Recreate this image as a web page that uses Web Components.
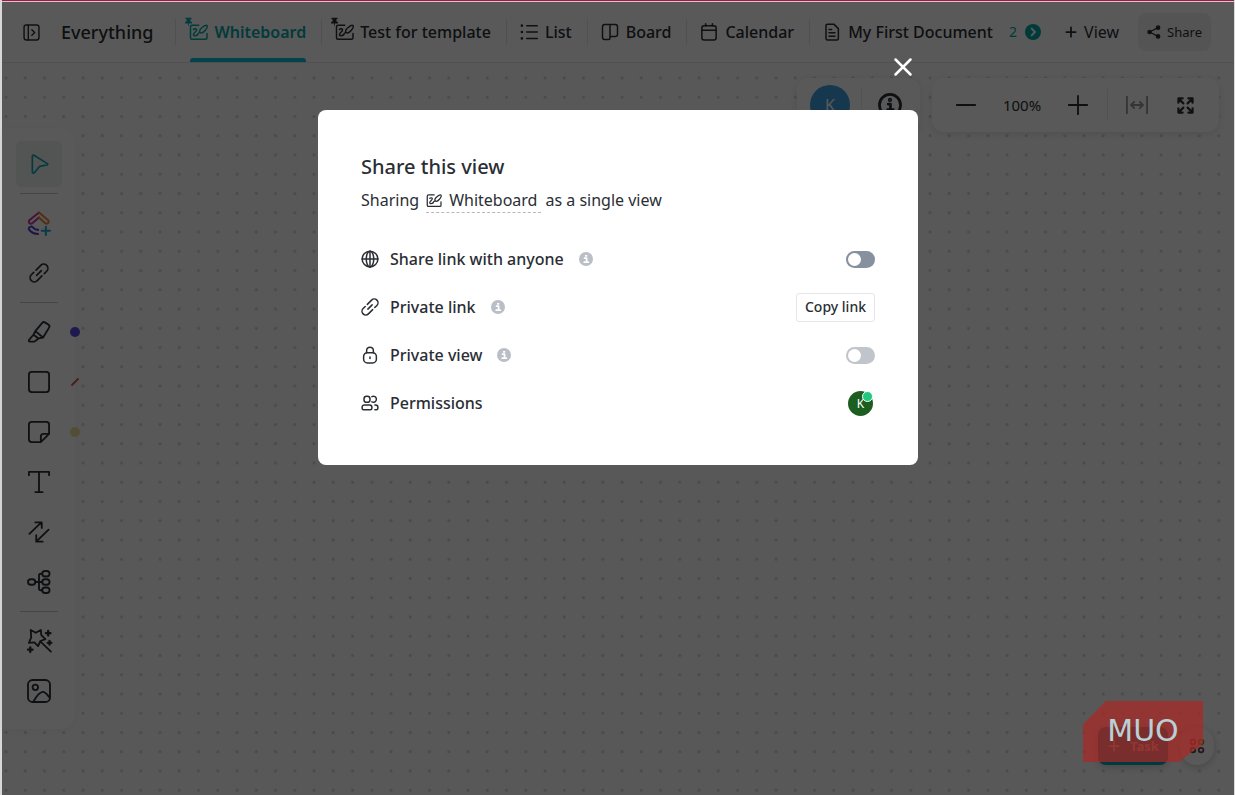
<!DOCTYPE html>
<html lang="en">
<head>
<meta charset="utf-8">
<meta name="viewport" content="width=device-width, initial-scale=1">
<title>Whiteboard</title>
<style>
  body {
    margin: 0;
    background: #fff;
    color: #2a2e34;
    font: 16px/24px "Noto Sans", "Open Sans", sans-serif;
  }
</style>
</head>
<body>
<work-space>
  <view-bar slot="bar"></view-bar>
  <tool-rail slot="tools"></tool-rail>
  <canvas-controls slot="controls"></canvas-controls>
  <task-tray slot="tray"></task-tray>
  <share-dialog slot="dialog">
    <share-row icon="globe" label="Share link with anyone" info>
      <toggle-switch label="Share link with anyone"></toggle-switch>
    </share-row>
    <share-row icon="link" label="Private link" info>
      <copy-button>Copy link</copy-button>
    </share-row>
    <share-row icon="lock" label="Private view" info>
      <toggle-switch label="Private view" disabled></toggle-switch>
    </share-row>
    <share-row icon="people" label="Permissions">
      <user-avatar online>K</user-avatar>
    </share-row>
  </share-dialog>
  <brand-mark slot="mark">MUO</brand-mark>
</work-space>

<script>
// 24x24 stroke icons, shared by every component
const ICONS = {
  panel: '<rect x="1.500" y="1.500" width="21" height="21" rx="3"/><path d="M7.500 1.500v21M12.500 8l4 4-4 4"/>',
  board2: '<path d="M13 3H4a2 2 0 0 0-2 2v14.500a2 2 0 0 0 2 2h18a2 2 0 0 0 2-2V14"/><path d="M6 8.500c1.500-1.500 4.500-1 4 1-.5 2.500-4 3.500-4 6 0 2 3.500 2 5.500 0"/><path d="M11.500 15.500c.5-1.500 1.500-2.500 3-3M14.500 12.500c-1-2 .5-4.500 3-6.500C20 4 23 2.500 24 3.500s-.5 4-2.500 6.500-5 4-7 2.500z"/>',
  list: '<path d="M9 3.500h14M9 12h14M9 20.500h14"/><g fill="currentColor" stroke="none"><circle cx="2.500" cy="3.500" r="1.700"/><circle cx="2.500" cy="12" r="1.700"/><circle cx="2.500" cy="20.500" r="1.700"/></g>',
  board: '<path d="M5 2h14a3 3 0 0 1 3 3v10a3 3 0 0 1-3 3h-7v2a2 2 0 0 1-2 2H5a3 3 0 0 1-3-3V5a3 3 0 0 1 3-3zM12 2v16"/>',
  calendar: '<rect x="2.500" y="3.500" width="19" height="19" rx="3"/><path d="M2.500 9.500h19M7.500 1v3M16.500 1v3"/>',
  doc: '<path d="M6 1.500h8.500l6 6v13a2 2 0 0 1-2 2H6a2 2 0 0 1-2-2v-17a2 2 0 0 1 2-2zM8 8.500h3.500M8 13h8M8 17.500h8"/>',
  plus: '<path d="M12 4v16M4 12h16"/>',
  minus: '<path d="M2 12h20"/>',
  bigplus: '<path d="M12 2v20M2 12h20"/>',
  share: '<g fill="currentColor"><circle cx="4.500" cy="12" r="3"/><circle cx="19" cy="4.500" r="3"/><circle cx="19" cy="19.500" r="3"/></g><path d="M19 4.500L4.500 12 19 19.500"/>',
  go: '<circle cx="12" cy="12" r="12" fill="currentColor" stroke="none"/><path d="M10 7l5 5-5 5" stroke="#fff"/>',
  info: '<circle cx="12" cy="12" r="11.500"/><path d="M10 11h2.500v6M9.500 17h6"/><circle cx="12" cy="6.500" r=".8" fill="currentColor"/>',
  infofill: '<circle cx="12" cy="12" r="12" fill="currentColor" stroke="none"/><path d="M9.500 10.500H13v7M9 17.500h7M11.500 6.500h1.500" stroke="#fff"/>',
  fit: '<path d="M1 3v18M23 3v18M6 12h12M9 8.500L5.500 12 9 15.500M15 8.500l3.500 3.500-3.500 3.500"/>',
  expand: '<path d="M2 8V2h6M16 2h6v6M22 16v6h-6M8 22H2v-6M2 2l7 7M22 2l-7 7M22 22l-7-7M2 22l7-7"/>',
  close: '<path d="M3 3l18 18M21 3L3 21"/>',
  cursor: '<path d="M4 3c0-1.500 1-2 2-1.500l16 10c1 .7.500 1.500-.5 1.700L14 14.500c-1 .2-1.500.5-2 1L7 22c-1 1.500-3 1-3-.5z"/>',
  link: '<g transform="rotate(-45 12 12)"><path d="M12 7h8a5 5 0 0 1 0 10h-4M12 17H4A5 5 0 0 1 4 7h4M8 12h8"/></g>',
  marker: '<path d="M8 11l7.500-9c1-1.200 2-1.200 3-.5l4 2.500c1 .8 1.200 2 .5 3.200L16.500 18l-5 1L6 15zM6 15l-4 4.500c-1.500 1.500-1.500 3 0 3h5l4.500-3.500M8 11l8.500 7M6 15l5.500 4"/>',
  square: '<rect x="1" y="1" width="22" height="22" rx="3"/>',
  note: '<path d="M4 1h16a3 3 0 0 1 3 3v10l-9 9H4a3 3 0 0 1-3-3V4a3 3 0 0 1 3-3zM23 14h-6a3 3 0 0 0-3 3v6"/>',
  text: '<path d="M1 4.500V1h22v3.500M12 1v22M8 23h8"/>',
  arrows: '<path d="M1.500 14L14 2M8 1.500h7v6M22.500 9.500L9.500 22M9 15.500v7h7"/>',
  map: '<rect x="0" y="9" width="8" height="6" rx="3"/><rect x="15.500" y="0" width="8" height="6" rx="3"/><rect x="15.500" y="9" width="8" height="6" rx="3"/><rect x="15.500" y="18" width="8" height="6" rx="3"/><path d="M8 12h7.500M15.500 3H14a2 2 0 0 0-2 2v14a2 2 0 0 0 2 2h1.500"/>',
  wand: '<path d="M3 0l5.500 3L14 0l.5 5.500L19 10l-5.500 2L11 17.500 7 13.500l-6 .5 2.500-6zM14 13l11 10.500"/><path stroke-width="2.500" d="M22 1v5M19.500 3.500h5M23.500 12v4M21.500 14h4M2.500 19v5M0 21.500h5"/>',
  image: '<rect x="0" y="0" width="24" height="24" rx="5"/><circle cx="8" cy="8" r="3"/><path d="M6 23.500c2.500-4.500 6.500-10 10-10.500 3-.3 5 3 7.500 6"/>',
  globe: '<circle cx="12" cy="12" r="10.500"/><ellipse cx="12" cy="12" rx="5" ry="10.500"/><path d="M12 1.500v21M1.500 12h21"/>',
  lock: '<rect x="3.500" y="9" width="17" height="13.500" rx="5"/><path d="M7.500 9V6a4.500 4.500 0 0 1 9 0v3M12 14.500v2"/>',
  people: '<rect x="4" y="3" width="8" height="8" rx="3.500"/><path d="M4.500 14.500h7a3 3 0 0 1 3 3V19a2 2 0 0 1-2 2h-9a2 2 0 0 1-2-2v-1.500a3 3 0 0 1 3-3zM14.500 3.500c3-1.500 6 .5 6 3.500s-3 5-6 3.500M18.500 14.500h1a3 3 0 0 1 3 3V19a2 2 0 0 1-2 2h-2"/>',
  pin: '<path d="M4 2h16v4h-3v5l4 2v4h-8v6h-2v-6H3v-4l4-2V6H4z" fill="currentColor" stroke="none"/>',
  clickup: '<g fill="none" stroke-width="2.200"><path d="M12 .5L1.500 9c-1 1-.5 3 .5 3.500s2 .2 3-.5l7-6" stroke="#c4359b"/><path d="M12 .5L22 9c1 1 .5 3-.5 3.500s-2 .2-3-.5L12 6" stroke="#e8833a"/><path d="M11 24c-4 0-8-2-10-5-.5-1.500.5-2.500 2-3s2 .5 3 1.500c1.500 1.500 3 2 5 2" stroke="#5b3ed0"/><path d="M19.500 16v9M15 20.500h9" stroke="#22a7d0"/></g>',
  apps: '<circle cx="5" cy="5" r="4" stroke="#e0458c"/><circle cx="19" cy="5" r="4" stroke="#79a83a"/><circle cx="5" cy="19" r="4" stroke="#1f6b46"/><circle cx="19" cy="19" r="4" stroke="#8a3a50"/>'
};

class UiIcon extends HTMLElement {
  connectedCallback() {
    const weight = this.getAttribute('weight') || 2;
    this.attachShadow({ mode: 'open' }).innerHTML = `
      <style>
        :host { display: inline-block; flex: none; width: 18px; height: 18px; }
        svg { display: block; width: 100%; height: 100%; overflow: visible; }
      </style>
      <svg viewBox="0 0 24 24" fill="none" stroke="currentColor" stroke-width="${weight}"
        stroke-linecap="round" stroke-linejoin="round" aria-hidden="true">${ICONS[this.getAttribute('name')]}</svg>
    `;
  }
}

class WorkSpace extends HTMLElement {
  connectedCallback() {
    this.attachShadow({ mode: 'open' }).innerHTML = `
      <style>
        :host {
          display: flex;
          flex-direction: column;
          box-sizing: border-box;
          min-height: 100vh;
          position: relative;
          border: solid #d8d8d8;
          border-width: 0 1px 0 2px;
        }
        .accent { height: 1px; background: #8d2448; border-bottom: 1px solid #f2b8c6; }
        main {
          flex: 1;
          display: flex;
          align-items: flex-start;
          justify-content: space-between;
          background: #fcfcfc radial-gradient(circle at 4px 15px, #d4d4d4 1px, transparent 2px);
          background-size: calc(100% / 64) calc(100% / 38);
        }
        ::slotted([slot=tools]) { margin-top: 65px; }
        ::slotted([slot=controls]) { margin: 15px 15px 0 0; }
        .scrim { position: absolute; inset: 2px 0 0; background: rgba(0, 0, 0, .65); }
        ::slotted([slot=tray]) { position: absolute; right: 20px; bottom: 30px; }
        ::slotted([slot=mark]) { position: absolute; right: 31px; bottom: 33px; }
        ::slotted([slot=dialog]) { position: absolute; inset: 50px 0 auto; }
      </style>
      <div class="accent"></div>
      <slot name="bar"></slot>
      <main>
        <slot name="tools"></slot>
        <slot name="controls"></slot>
      </main>
      <slot name="tray"></slot>
      <div class="scrim"></div>
      <slot name="mark"></slot>
      <slot name="dialog"></slot>
    `;
  }
}

class ViewTab extends HTMLElement {
  connectedCallback() {
    this.attachShadow({ mode: 'open' }).innerHTML = `
      <style>
        :host { display: flex; align-items: center; height: 60px; }
        :host::before { content: ""; width: 1px; height: 26px; background: #e4e6ea; }
        a {
          position: relative;
          display: flex;
          align-items: center;
          gap: 7px;
          height: 60px;
          padding: 0 15px 0 13px;
          color: inherit;
          font-weight: 500;
          text-decoration: none;
          white-space: nowrap;
        }
        :host([active]) a { color: #08a8a8; font-weight: 600; }
        :host([active]) a::after {
          content: "";
          position: absolute;
          left: 14px;
          right: 15px;
          bottom: 0;
          height: 4px;
          border-radius: 3px 3px 0 0;
          background: #08bcd4;
        }
        .pin { position: absolute; left: 8px; top: 15px; width: 9px; height: 9px; }
      </style>
      <a href="#">
        ${this.hasAttribute('pinned') ? '<ui-icon class="pin" name="pin"></ui-icon>' : ''}
        <ui-icon name="${this.getAttribute('icon')}"></ui-icon>
        <slot></slot>
      </a>
    `;
  }
}

class ViewBar extends HTMLElement {
  connectedCallback() {
    this.attachShadow({ mode: 'open' }).innerHTML = `
      <style>
        :host {
          display: flex;
          align-items: center;
          height: 60px;
          padding: 0 23px 0 21px;
          border-bottom: 1px solid #e4e6ea;
          background: #fff;
        }
        button { border: 0; padding: 0; background: none; color: inherit; font: inherit; }
        h1 { margin: 0 22px 0 20px; font-size: 18px; font-weight: 500; }
        nav { display: flex; flex: 1; }
        .side { display: flex; }
        .side ui-icon { width: 17px; height: 17px; margin-right: 1px; }
        .more { display: flex; align-items: center; gap: 8px; color: #0aa; font-size: 14px; margin-right: 23px; }
        .more ui-icon { width: 16px; height: 16px; color: #05a5a5; }
        .add { display: flex; align-items: center; gap: 6px; margin-right: 19px; }
        .add ui-icon { width: 14px; height: 14px; }
        .share {
          display: flex;
          align-items: center;
          gap: 6px;
          height: 38px;
          padding: 0 9px;
          border-radius: 8px;
          background: #f0f0f1;
          font-size: 13px;
        }
        .share ui-icon { width: 14px; height: 14px; }
      </style>
      <button class="side" aria-label="Open sidebar"><ui-icon name="panel"></ui-icon></button>
      <h1>Everything</h1>
      <nav>
        <view-tab icon="board2" pinned active>Whiteboard</view-tab>
        <view-tab icon="board2" pinned>Test for template</view-tab>
        <view-tab icon="list">List</view-tab>
        <view-tab icon="board">Board</view-tab>
        <view-tab icon="calendar">Calendar</view-tab>
        <view-tab icon="doc">My First Document</view-tab>
      </nav>
      <button class="more" aria-label="More views">2 <ui-icon name="go" weight="3"></ui-icon></button>
      <button class="add"><ui-icon name="plus" weight="3"></ui-icon>View</button>
      <button class="share"><ui-icon name="share"></ui-icon>Share</button>
    `;
  }
}

class ToolRail extends HTMLElement {
  connectedCallback() {
    const tool = (name, label, badge = '') =>
      `<button aria-label="${label}" class="${name}"><ui-icon name="${name}"></ui-icon>${badge}</button>`;
    this.attachShadow({ mode: 'open' }).innerHTML = `
      <style>
        :host {
          display: flex;
          flex-direction: column;
          gap: 4px;
          width: 46px;
          padding: 13px 13px 15px 14px;
          border-radius: 0 14px 14px 0;
          background: #fff;
          box-shadow: 0 2px 8px rgba(0, 0, 0, .04);
        }
        button {
          position: relative;
          display: grid;
          place-items: center;
          height: 46px;
          padding: 0;
          border: 0;
          border-radius: 6px;
          background: none;
          color: inherit;
        }
        button.cursor { background: #eeeff0; color: #10a5b0; }
        ui-icon { width: 22px; height: 22px; }
        .cursor ui-icon, .link ui-icon { width: 20px; height: 20px; }
        hr { width: 38px; height: 1px; margin: 2px auto; border: 0; background: #c4c7cc; }
        i { position: absolute; left: 54px; top: 18px; width: 10px; height: 10px; border-radius: 50%; }
        .line { left: 58px; width: 2px; border-radius: 0; transform: rotate(45deg); }
      </style>
      ${tool('cursor', 'Select')}
      <hr>
      ${tool('clickup', 'Add task')}
      ${tool('link', 'Link')}
      <hr>
      ${tool('marker', 'Draw', '<i style="background: #5b4be0"></i>')}
      ${tool('square', 'Shape', '<i class="line" style="background: #d05a5a"></i>')}
      ${tool('note', 'Sticky note', '<i style="background: #e8dc9c"></i>')}
      ${tool('text', 'Text')}
      ${tool('arrows', 'Connector')}
      ${tool('map', 'Mind map')}
      <hr>
      ${tool('wand', 'Generate')}
      ${tool('image', 'Image')}
    `;
  }
}

class CanvasControls extends HTMLElement {
  connectedCallback() {
    this.attachShadow({ mode: 'open' }).innerHTML = `
      <style>
        :host { display: flex; gap: 12px; }
        section {
          display: flex;
          align-items: center;
          height: 54px;
          padding: 0 10px;
          border-radius: 12px;
          background: #fff;
          box-shadow: 0 2px 8px rgba(0, 0, 0, .1);
        }
        button { display: grid; place-items: center; width: 48px; height: 48px; padding: 0; border: 0; background: none; color: inherit; }
        ui-icon { width: 22px; height: 22px; }
        .people button { width: 40px; }
        .avatar {
          width: 40px;
          margin: 0 11px 0 3px;
          border-radius: 50%;
          background: #40a0e0;
          color: #fff;
          line-height: 40px;
          text-align: center;
        }
        .rule { width: 1px; height: 32px; background: #e9ebee; }
        .people .rule { margin-right: 8px; }
        .zoom .rule { margin: 0 5px; }
        .value { width: 64px; font-size: 15px; text-align: center; }
        .fit { color: #93979e; }
        .full { width: 17px; height: 17px; }
      </style>
      <section class="people">
        <span class="avatar">K</span>
        <span class="rule"></span>
        <button aria-label="Info"><ui-icon name="info" weight="3"></ui-icon></button>
      </section>
      <section class="zoom">
        <button aria-label="Zoom out"><ui-icon name="minus"></ui-icon></button>
        <span class="value">100%</span>
        <button aria-label="Zoom in"><ui-icon name="bigplus"></ui-icon></button>
        <span class="rule"></span>
        <button class="fit" aria-label="Fit width"><ui-icon name="fit"></ui-icon></button>
        <button aria-label="Full screen"><ui-icon class="full" name="expand" weight="3"></ui-icon></button>
      </section>
    `;
  }
}

class TaskTray extends HTMLElement {
  connectedCallback() {
    this.attachShadow({ mode: 'open' }).innerHTML = `
      <style>
        :host { display: flex; gap: 12px; }
        button {
          display: flex;
          align-items: center;
          justify-content: center;
          gap: 9px;
          width: 34px;
          height: 38px;
          padding: 0;
          border: 0;
          border-radius: 17px;
          background: #fff;
          box-shadow: 0 2px 8px rgba(0, 0, 0, .2);
          font: 700 13px/20px "Noto Sans", sans-serif;
          color: #fff;
        }
        .task { width: 70px; border-radius: 8px; background: #03a4b8; }
        ui-icon { width: 14px; height: 14px; }
      </style>
      <button class="task"><ui-icon name="plus" weight="3"></ui-icon>Task</button>
      <button aria-label="Apps"><ui-icon name="apps" weight="3"></ui-icon></button>
    `;
  }
}

class BrandMark extends HTMLElement {
  connectedCallback() {
    this.attachShadow({ mode: 'open' }).innerHTML = `
      <style>
        :host {
          display: block;
          width: 120px;
          height: 61px;
          background: rgba(172, 40, 36, .7);
          clip-path: polygon(19% 0, 100% 0, 100% 70%, 80% 100%, 0 100%, 0 38%);
          color: #b9d0d6;
          font: 30px/60px "DejaVu Sans", sans-serif;
          text-align: center;
        }
      </style>
      <slot></slot>
    `;
  }
}

class ShareDialog extends HTMLElement {
  connectedCallback() {
    this.attachShadow({ mode: 'open' }).innerHTML = `
      <style>
        :host { display: block; }
        .frame { display: flex; flex-direction: column; width: 600px; max-width: 100%; margin: 0 auto; }
        .close {
          display: grid;
          place-items: center;
          align-self: flex-end;
          width: 30px;
          height: 34px;
          margin-bottom: 26px;
          padding: 0;
          border: 0;
          background: none;
          color: #fff;
        }
        .close ui-icon { width: 20px; height: 20px; }
        section { padding: 43px 43px 38px; border-radius: 8px; background: #fff; }
        h2 { margin: 0 0 7px; font-size: 20px; font-weight: 500; line-height: 28px; }
        p { display: flex; gap: 4px; margin: 0 0 22px; line-height: 24px; }
        .view {
          display: flex;
          align-items: center;
          gap: 8px;
          margin-left: 3px;
          padding-right: 4px;
          border-bottom: 1px dashed #b5b9bf;
        }
        .view ui-icon { width: 15px; height: 15px; }
      </style>
      <div class="frame">
        <button class="close" aria-label="Close"><ui-icon name="close" weight="3"></ui-icon></button>
        <section role="dialog" aria-labelledby="title">
          <h2 id="title">Share this view</h2>
          <p>Sharing <span class="view"><ui-icon name="board2" weight="2"></ui-icon>Whiteboard</span> as a single view</p>
          <slot></slot>
        </section>
      </div>
    `;
  }
}

class ShareRow extends HTMLElement {
  connectedCallback() {
    this.attachShadow({ mode: 'open' }).innerHTML = `
      <style>
        :host { display: flex; align-items: center; height: 48px; }
        .label { margin: 0 15px 0 11px; font-weight: 500; }
        .info { width: 14px; height: 14px; color: #b9bec7; }
        slot { display: flex; margin-left: auto; }
      </style>
      <ui-icon name="${this.getAttribute('icon')}"></ui-icon>
      <span class="label">${this.getAttribute('label')}</span>
      ${this.hasAttribute('info') ? '<ui-icon class="info" name="infofill" weight="3"></ui-icon>' : ''}
      <slot></slot>
    `;
  }
}

class ToggleSwitch extends HTMLElement {
  connectedCallback() {
    this.attachShadow({ mode: 'open' }).innerHTML = `
      <style>
        :host { display: block; margin-left: auto; }
        input {
          display: block;
          appearance: none;
          width: 29px;
          height: 17px;
          margin: 0;
          padding: 2px;
          box-sizing: border-box;
          border-radius: 9px;
          background: #87909e;
        }
        input::before { content: ""; display: block; width: 13px; height: 13px; border-radius: 50%; background: #fff; }
        input:checked { background: #7b68ee; }
        input:checked::before { margin-left: auto; }
        input:disabled { background: #c0c4cb; }
      </style>
      <input type="checkbox" role="switch" aria-label="${this.getAttribute('label')}" ${this.hasAttribute('disabled') ? 'disabled' : ''}>
    `;
  }
}

class CopyButton extends HTMLElement {
  connectedCallback() {
    this.attachShadow({ mode: 'open' }).innerHTML = `
      <style>
        :host { display: block; margin-left: auto; }
        button {
          display: block;
          height: 29px;
          padding: 0 8px;
          border: 1px solid #e4e6ea;
          border-radius: 3px;
          background: #fff;
          color: inherit;
          font: 500 14px/20px "Noto Sans", sans-serif;
        }
      </style>
      <button><slot></slot></button>
    `;
  }
}

class UserAvatar extends HTMLElement {
  connectedCallback() {
    this.attachShadow({ mode: 'open' }).innerHTML = `
      <style>
        :host {
          position: relative;
          display: block;
          width: 25px;
          margin: 0 2px 0 auto;
          border-radius: 50%;
          background: #1b5e20;
          color: #fff;
          font-size: 12px;
          line-height: 25px;
          text-align: center;
        }
        :host([online])::after {
          content: "";
          position: absolute;
          top: 0;
          right: 0;
          width: 9px;
          height: 9px;
          border: 1px solid #fff;
          border-radius: 50%;
          background: #20c77c;
        }
      </style>
      <slot></slot>
    `;
  }
}

customElements.define('ui-icon', UiIcon);
customElements.define('work-space', WorkSpace);
customElements.define('view-tab', ViewTab);
customElements.define('view-bar', ViewBar);
customElements.define('tool-rail', ToolRail);
customElements.define('canvas-controls', CanvasControls);
customElements.define('task-tray', TaskTray);
customElements.define('brand-mark', BrandMark);
customElements.define('share-dialog', ShareDialog);
customElements.define('share-row', ShareRow);
customElements.define('toggle-switch', ToggleSwitch);
customElements.define('copy-button', CopyButton);
customElements.define('user-avatar', UserAvatar);
</script>
</body>
</html>
